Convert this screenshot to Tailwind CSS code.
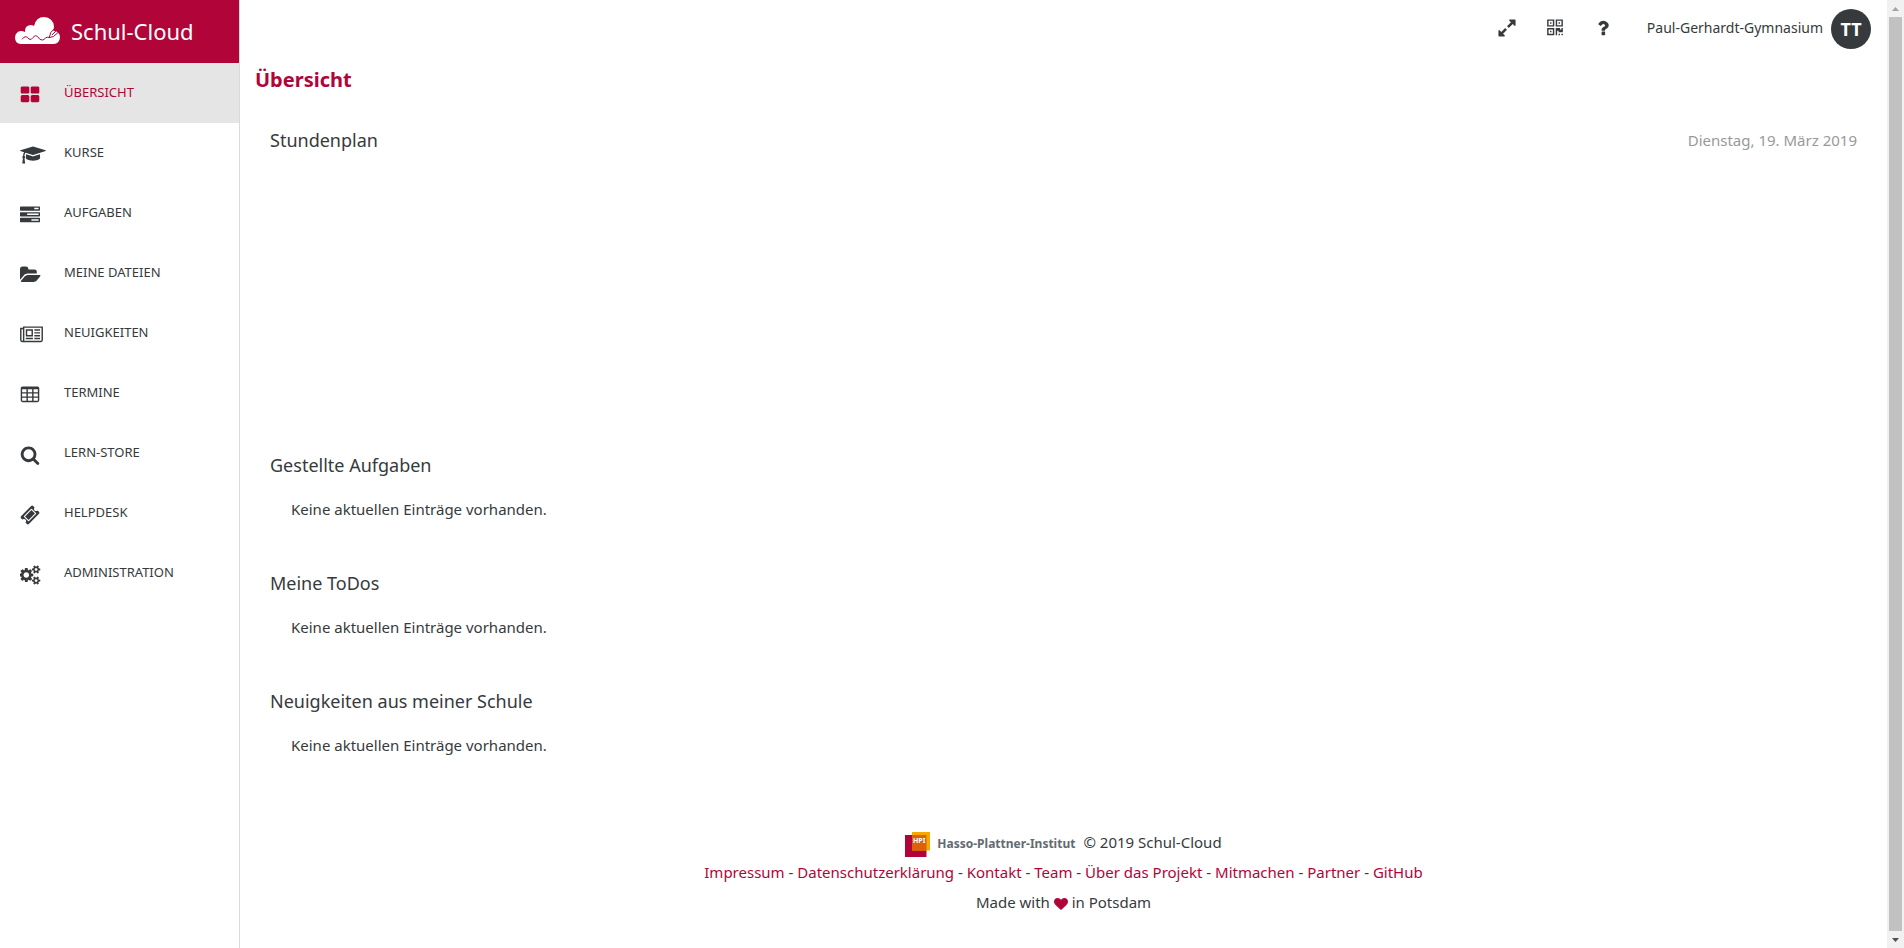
<!DOCTYPE html>
<html lang="de">
<head>
<meta charset="utf-8">
<title>Übersicht – Schul-Cloud</title>
<script src="https://cdn.jsdelivr.net/npm/@tailwindcss/browser@4"></script>
</head>
<body class="flex h-screen overflow-hidden bg-white font-['Noto_Sans',sans-serif] text-[15px] text-[#373a3c]">

<aside class="w-60 shrink-0 border-r border-[#d9d9d9]">
  <a href="#" class="flex h-[63px] items-center gap-[11px] bg-[#b10438] pb-0.5 pl-[15px] text-white">
    <svg class="h-[27px] w-[45px]" viewBox="0 0 45 27">
      <path fill="#fff" d="M6 27Q0 26.500 0 20.500Q.5 14.500 6 14Q8 14 10 15Q9.500 8.500 15.500 8Q17.500 8 19 9Q21 0 29 0Q38 .5 39 9.500Q39 12 38 13.500Q45 14.500 45 20.500Q44.500 26.500 38.500 27Z"/>
      <path fill="none" stroke="#b10438" stroke-width="1" stroke-linecap="round" stroke-linejoin="round" d="M7.300 22Q8.500 19.700 11 19.700Q12.500 20 14 22Q16 23.800 18 20.500Q20.500 17 22.500 19.500Q25 23.500 27.300 23Q29 23 30.500 21Q32 19.500 34.300 20.500M34.300 20.500L35.700 15.700L40.500 10.500M34.300 20.500L38.500 19.500L44.800 14M37.200 17.800L42.500 12.300"/>
    </svg>
    <span class="text-[22px] leading-7">Schul-Cloud</span>
  </a>
  <nav class="text-[13px] uppercase">
    <a href="#" class="flex h-[60px] items-center bg-[#e5e5e5] pl-5 text-[#b10438]">
      <span class="w-11 pt-1"><svg class="h-5 w-5" viewBox="0 0 1792 1792" fill="currentColor"><path d="M832 1024v384q0 52-38 90t-90 38h-512q-52 0-90-38t-38-90v-384q0-52 38-90t90-38h512q52 0 90 38t38 90zm0-768v384q0 52-38 90t-90 38h-512q-52 0-90-38t-38-90v-384q0-52 38-90t90-38h512q52 0 90 38t38 90zm896 768v384q0 52-38 90t-90 38h-512q-52 0-90-38t-38-90v-384q0-52 38-90t90-38h512q52 0 90 38t38 90zm0-768v384q0 52-38 90t-90 38h-512q-52 0-90-38t-38-90v-384q0-52 38-90t90-38h512q52 0 90 38t38 90z"/></svg></span>Übersicht</a>
    <a href="#" class="flex h-[60px] items-center pl-5">
      <span class="w-11 pt-1"><svg class="h-5 w-[26px]" viewBox="0 0 2304 1792" fill="currentColor"><path d="M1774 836l18 316q4 69-82 128t-235 93.500-323 34.500-323-34.500-235-93.500-82-128l18-316 574 181q22 7 48 7t48-7zm530-324q0 23-22 31l-1120 352q-4 1-10 1t-10-1l-652-206q-43 34-71 111.500t-34 178.500q63 36 63 109 0 69-58 107l58 433q2 14-8 25-9 11-24 11h-192q-15 0-24-11-10-11-8-25l58-433q-58-38-58-107 0-73 65-111 11-207 98-330l-333-104q-22-8-22-31t22-31l1120-352q4-1 10-1t10 1l1120 352q22 8 22 31z"/></svg></span>Kurse</a>
    <a href="#" class="flex h-[60px] items-center pl-5">
      <span class="w-11 pt-1"><svg class="h-5 w-5" viewBox="0 0 1792 1792" fill="currentColor"><path d="M1024 1408h640v-128h-640v128zm-384-512h1024v-128h-1024v128zm640-512h384v-128h-384v128zm512 832v256q0 26-19 45t-45 19h-1664q-26 0-45-19t-19-45v-256q0-26 19-45t45-19h1664q26 0 45 19t19 45zm0-512v256q0 26-19 45t-45 19h-1664q-26 0-45-19t-19-45v-256q0-26 19-45t45-19h1664q26 0 45 19t19 45zm0-512v256q0 26-19 45t-45 19h-1664q-26 0-45-19t-19-45v-256q0-26 19-45t45-19h1664q26 0 45 19t19 45z"/></svg></span>Aufgaben</a>
    <a href="#" class="flex h-[60px] items-center pl-5">
      <span class="w-11 pt-1"><svg class="h-5 w-[21px]" viewBox="-64 0 1920 1792" fill="currentColor"><path d="M1815 952q0 31-31 66l-336 396q-43 51-120.500 86.500t-143.500 35.500h-1088q-34 0-60.500-13t-26.500-43q0-31 31-66l336-396q43-51 120.500-86.500t143.500-35.500h1088q34 0 60.500 13t26.500 43zm-343-344v160h-832q-94 0-197 47.500t-164 119.500l-337 396-5 6q0-4-.5-12.500t-.5-12.500v-960q0-92 66-158t158-66h320q92 0 158 66t66 158v32h544q92 0 158 66t66 158z"/></svg></span>Meine Dateien</a>
    <a href="#" class="flex h-[60px] items-center pl-5">
      <span class="w-11 pt-1"><svg class="h-5 w-[23px]" viewBox="0 0 2048 1792" fill="currentColor"><path d="M1024 512h-384v384h384v-384zm128 640v128h-640v-128h640zm0-768v640h-640v-640h640zm640 768v128h-512v-128h512zm0-256v128h-512v-128h512zm0-256v128h-512v-128h512zm0-256v128h-512v-128h512zm-1536 960v-960h-128v960q0 26 19 45t45 19 45-19 19-45zm1664 0v-1088h-1536v1088q0 33-11 64h1483q26 0 45-19t19-45zm128-1216v1216q0 80-56 136t-136 56h-1664q-80 0-136-56t-56-136v-1088h256v-128h1792z"/></svg></span>Neuigkeiten</a>
    <a href="#" class="flex h-[60px] items-center pl-5">
      <span class="w-11 pt-1"><svg class="h-5 w-5" viewBox="0 0 1792 1792" fill="currentColor" fill-rule="evenodd"><path d="M224 128h1344q160 0 160 160v1088q0 160-160 160h-1344q-160 0-160-160v-1088q0-160 160-160zM192 384v256h384v-256zM704 384v256h384v-256zM1216 384v256h384v-256zM192 768v256h384v-256zM704 768v256h384v-256zM1216 768v256h384v-256zM192 1152v256h384v-256zM704 1152v256h384v-256zM1216 1152v256h384v-256z"/></svg></span>Termine</a>
    <a href="#" class="flex h-[60px] items-center pl-5">
      <span class="w-11 pt-1"><svg class="h-5 w-5" viewBox="0 0 1792 1792" fill="currentColor"><path d="M1216 832q0-185-131.500-316.500t-316.500-131.500-316.500 131.500-131.500 316.500 131.500 316.500 316.500 131.500 316.500-131.500 131.500-316.500zm512 832q0 52-38 90t-90 38q-54 0-90-38l-343-342q-179 124-399 124-143 0-273.500-55.500t-225-150-150-225-55.500-273.500 55.500-273.500 150-225 225-150 273.500-55.500 273.500 55.500 225 150 150 225 55.500 273.500q0 220-124 399l343 343q37 37 37 90z"/></svg></span>Lern-Store</a>
    <a href="#" class="flex h-[60px] items-center pl-5">
      <span class="w-11 pt-1"><svg class="h-5 w-5" viewBox="0 0 1792 1792" fill="currentColor"><path d="M1024 452l316 316-572 572-316-316zm-211 979l618-618q19-19 19-45t-19-45l-362-362q-18-18-45-18t-45 18l-618 618q-19 19-19 45t19 45l362 362q18 18 45 18t45-18zm889-637l-907 908q-37 37-90.500 37t-90.500-37l-126-126q56-56 56-136t-56-136-136-56-136 56l-125-126q-37-37-37-90.500t37-90.500l907-906q37-37 90.500-37t90.500 37l125 125q-56 56-56 136t56 136 136 56 136-56l126 125q37 37 37 90.500t-37 90.500z"/></svg></span>Helpdesk</a>
    <a href="#" class="flex h-[60px] items-center pl-5">
      <span class="w-11 pt-1"><svg class="h-5 w-[21px]" viewBox="0 0 1920 1792" fill="currentColor"><path d="M832 896q0-106-75-181t-181-75-181 75-75 181 75 181 181 75 181-75 75-181zm768 512q0-52-38-90t-90-38-90 38-38 90q0 53 37.500 90.500t90.500 37.500 90.500-37.500 37.500-90.500zm0-1024q0-52-38-90t-90-38-90 38-38 90q0 53 37.500 90.500t90.500 37.500 90.500-37.500 37.500-90.500zm-384 421v185q0 10-7 19.500t-16 10.500l-155 24q-11 35-32 76 34 48 90 115 7 11 7 20 0 12-7 19-23 30-82.500 89.500t-78.500 59.500q-11 0-21-7l-115-90q-37 19-77 31-11 108-23 155-7 24-30 24h-186q-11 0-20-7.500t-10-17.500l-23-153q-34-10-75-31l-118 89q-7 7-20 7-11 0-21-8-144-133-144-160 0-9 7-19 10-14 41-53t47-61q-23-44-35-82l-152-24q-10-1-17-9.500t-7-19.500v-185q0-10 7-19.500t16-10.500l155-24q11-35 32-76-34-48-90-115-7-11-7-20 0-12 7-20 22-30 82-89t79-59q11 0 21 7l115 90q34-18 77-32 11-108 23-154 7-24 30-24h186q11 0 20 7.500t10 17.500l23 153q34 10 75 31l118-89q8-7 20-7 11 0 21 8 144 133 144 160 0 8-7 19-12 16-42 54t-45 60q23 48 34 82l152 23q10 2 17 10.500t7 19.500zm640 533v140q0 16-149 31-12 27-30 52 51 113 51 138 0 4-4 7-122 71-124 71-8 0-46-47t-52-68q-20 2-30 2t-30-2q-14 21-52 68t-46 47q-2 0-124-71-4-3-4-7 0-25 51-138-18-25-30-52-149-15-149-31v-140q0-16 149-31 13-29 30-52-51-113-51-138 0-4 4-7 4-2 35-20t59-34 30-16q8 0 46 46.500t52 67.500q20-2 30-2t30 2q51-71 92-112l6-2q4 0 124 70 4 3 4 7 0 25-51 138 17 23 30 52 149 15 149 31zm0-1024v140q0 16-149 31-12 27-30 52 51 113 51 138 0 4-4 7-122 71-124 71-8 0-46-47t-52-68q-20 2-30 2t-30-2q-14 21-52 68t-46 47q-2 0-124-71-4-3-4-7 0-25 51-138-18-25-30-52-149-15-149-31v-140q0-16 149-31 13-29 30-52-51-113-51-138 0-4 4-7 4-2 35-20t59-34 30-16q8 0 46 46.500t52 67.500q20-2 30-2t30 2q51-71 92-112l6-2q4 0 124 70 4 3 4 7 0 25-51 138 17 23 30 52 149 15 149 31z"/></svg></span>Administration</a>
  </nav>
</aside>

<div class="min-w-0 flex-1">
  <header class="flex h-[57px] items-center justify-end pr-4">
    <div class="mr-[34px] flex items-center gap-[30px] pb-0.5">
      <button type="button" aria-label="Vollbild"><svg class="h-5 w-5" viewBox="0 0 1792 1792" fill="currentColor"><path d="M883 1056q0 13-10 23l-332 332 144 144q19 19 19 45t-19 45-45 19h-448q-26 0-45-19t-19-45v-448q0-26 19-45t45-19 45 19l144 144 332-332q10-10 23-10t23 10l114 114q10 10 10 23zm781-864v448q0 26-19 45t-45 19-45-19l-144-144-332 332q-10 10-23 10t-23-10l-114-114q-10-10-10-23t10-23l332-332-144-144q-19-19-19-45t19-45 45-19h448q26 0 45 19t19 45z"/></svg></button>
      <button type="button" aria-label="QR-Code"><svg class="h-5 w-4" viewBox="0 0 1408 1792" fill="currentColor"><path d="M384 1152v128h-128v-128h128zm0-768v128h-128v-128h128zm768 0v128h-128v-128h128zm-1024 1023h384v-383h-384v383zm0-767h384v-384h-384v384zm768 0h384v-384h-384v384zm-256 256v640h-640v-640h640zm512 512v128h-128v-128h128zm256 0v128h-128v-128h128zm0-512v384h-384v-128h-128v384h-128v-640h384v128h128v-128h128zm-768-768v640h-640v-640h640zm768 0v640h-640v-640h640z"/></svg></button>
      <button type="button" aria-label="Hilfe"><svg class="h-5 w-5" viewBox="0 0 1792 1792" fill="currentColor"><path d="M1088 1256v240q0 16-12 28t-28 12h-240q-16 0-28-12t-12-28v-240q0-16 12-28t28-12h240q16 0 28 12t12 28zm316-600q0 54-15.500 101t-35 76.500-55 59.500-57.500 43.500-61 35.500q-41 23-68.500 65t-27.500 67q0 17-12 32.500t-28 15.500h-240q-15 0-25.500-18.500t-10.500-37.500v-45q0-83 65-156.500t143-108.500q59-27 84-56t25-76q0-42-46.500-74t-107.500-32q-65 0-108 29-35 25-107 115-13 16-31 16-12 0-25-8l-164-125q-13-10-15.500-25t5.500-28q160-266 464-266 80 0 161 31t146 83 106 127.500 41 158.500z"/></svg></button>
    </div>
    <span class="mr-2 pb-0.5 text-sm">Paul-Gerhardt-Gymnasium</span>
    <button type="button" class="h-10 w-10 rounded-full bg-[#373a3c] text-lg font-bold text-white">TT</button>
  </header>

  <main class="pl-[15px] pr-[30px]">
    <h1 class="mt-[7px] text-xl leading-8 font-bold text-[#b10438]">Übersicht</h1>
    <section class="mt-7 h-[325px] pl-[15px]">
      <div class="flex items-center justify-between">
        <h2 class="text-lg leading-8">Stundenplan</h2>
        <time class="text-[#999]" datetime="2019-03-19">Dienstag, 19. März 2019</time>
      </div>
    </section>
    <section class="h-[118px] pl-[15px]">
      <h2 class="text-lg leading-8">Gestellte Aufgaben</h2>
      <p class="mt-4 pl-[21px] leading-6">Keine aktuellen Einträge vorhanden.</p>
    </section>
    <section class="h-[118px] pl-[15px]">
      <h2 class="text-lg leading-8">Meine ToDos</h2>
      <p class="mt-4 pl-[21px] leading-6">Keine aktuellen Einträge vorhanden.</p>
    </section>
    <section class="h-[118px] pl-[15px]">
      <h2 class="text-lg leading-8">Neuigkeiten aus meiner Schule</h2>
      <p class="mt-4 pl-[21px] leading-6">Keine aktuellen Einträge vorhanden.</p>
    </section>
  </main>

  <footer class="mt-6 text-center leading-[30px]">
    <div class="flex h-[30px] items-center justify-center">
      <a href="#" class="mr-2 flex items-center gap-[7px] pt-1 text-xs font-bold text-[#636a70]">
        <svg class="h-[25px] w-[25px]" viewBox="0 0 25 25"><path fill="#b10438" d="M0 3h21.500v22H0z"/><path fill="#f7a800" d="M7 0h18v18.500H7z"/><path fill="#dd6108" d="M7 3h14.500v15.500H7z"/><text x="8" y="11" font-family="Noto Sans" font-size="7" font-weight="700" fill="#fff">HPI</text></svg>
        Hasso-Plattner-Institut</a>
      <span>© 2019 Schul-Cloud</span>
    </div>
    <div>
      <a href="#" class="text-[#b10438]">Impressum</a> -
      <a href="#" class="text-[#b10438]">Datenschutzerklärung</a> -
      <a href="#" class="text-[#b10438]">Kontakt</a> -
      <a href="#" class="text-[#b10438]">Team</a> -
      <a href="#" class="text-[#b10438]">Über das Projekt</a> -
      <a href="#" class="text-[#b10438]">Mitmachen</a> -
      <a href="#" class="text-[#b10438]">Partner</a> -
      <a href="#" class="text-[#b10438]">GitHub</a>
    </div>
    <div>Made with <svg class="inline h-[14px] w-[14px] text-[#b10438]" viewBox="0 128 1792 1536" fill="currentColor"><path d="M896 1664q-26 0-44-18l-624-602q-10-8-27.500-26t-55.500-65.500-68-97.500-53.500-121-23.500-138q0-220 127-344t351-124q62 0 126.500 21.500t120 58 95.500 68.500 76 68q36-36 76-68t95.500-68.500 120-58 126.500-21.500q224 0 351 124t127 344q0 221-229 450l-623 600q-18 18-44 18z"/></svg> in Potsdam</div>
  </footer>
</div>

<!-- Scroll track -->
<div class="flex w-[17px] shrink-0 flex-col items-center bg-[#f1f1f1]" aria-hidden="true">
  <svg class="h-[17px] w-[17px] shrink-0" viewBox="0 0 17 17"><path fill="#a3a3a3" d="M5 11l3.500-4 3.500 4z"/></svg>
  <div class="w-[13px] flex-1 bg-[#c1c1c1]"></div>
  <svg class="h-[17px] w-[17px] shrink-0" viewBox="0 0 17 17"><path fill="#505050" d="M5 7l3.500 4 3.500-4z"/></svg>
</div>
</body>
</html>
